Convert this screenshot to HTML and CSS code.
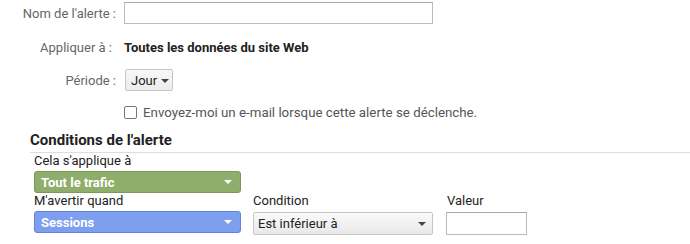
FILE: index.html
```html
<!DOCTYPE html>
<html lang="fr">
<head>
    <meta charset="UTF-8">
    <title>Nouvelle alerte</title>
    <link rel="stylesheet" href="styles.css">
</head>
<body>

<div class="alert-form">
    <div class="form-row row-name">
        <div class="form-label">Nom de l'alerte :</div>
        <input class="text-input name-input" type="text">
    </div>

    <div class="form-row row-apply">
        <div class="form-label label-apply">Appliquer à :</div>
        <div class="apply-value">Toutes les données du site Web</div>
    </div>

    <div class="form-row row-period">
        <div class="form-label">Période :</div>
        <button class="menu-button">Jour <span class="caret"></span></button>
    </div>

    <div class="form-row row-email">
        <div class="form-label"></div>
        <label class="check-label"><span class="checkbox"></span>Envoyez-moi un e-mail lorsque cette alerte se déclenche.</label>
    </div>
</div>

<div class="conditions">
    <h2>Conditions de l'alerte</h2>

    <div class="cond-block">
        <div class="cond-label">Cela s'applique à</div>
        <div class="pill pill-green">Tout le trafic <span class="caret caret-white"></span></div>
    </div>

    <div class="cond-grid">
        <div class="cond-col col-metric">
            <div class="cond-label">M'avertir quand</div>
            <div class="pill pill-blue">Sessions <span class="caret caret-white"></span></div>
        </div>
        <div class="cond-col col-condition">
            <div class="cond-label">Condition</div>
            <div class="select-box">Est inférieur à <span class="caret"></span></div>
        </div>
        <div class="cond-col col-value">
            <div class="cond-label">Valeur</div>
            <input class="text-input value-input" type="text">
        </div>
    </div>
</div>

</body>
</html>
```

FILE: styles.css
```css
body {
    font-family: Roboto, "Liberation Sans", Arial, sans-serif;
    font-size: 13px;
    color: #222;
    background: #fff;
    margin: 0;
    padding: 0;
    width: 690px;
    height: 244px;
    overflow: hidden;
}

.alert-form {
    padding-top: 2px;
}

.form-row {
    display: flex;
    align-items: center;
}

.form-label {
    width: 116px;
    text-align: right;
    color: #666;
    margin-right: 8px;
    flex-shrink: 0;
}

.label-apply {
    padding-right: 4px;
    width: 112px;
}

.text-input {
    box-sizing: border-box;
    border: 1px solid #bbb;
    border-top-color: #a8a8a8;
    margin: 0;
    padding: 0 4px;
    font: inherit;
    background: #fff;
}

.name-input {
    width: 309px;
    height: 22px;
}

.row-apply {
    margin-top: 14px;
    height: 18px;
}

.apply-value {
    font-weight: bold;
    color: #222;
}

.row-period {
    margin-top: 13px;
}

.menu-button {
    box-sizing: border-box;
    margin-left: 1px;
    height: 22px;
    width: 48px;
    padding: 0 0 0 5px;
    text-align: left;
    font: inherit;
    font-size: 13px;
    color: #222;
    border: 1px solid #c6c6c6;
    border-radius: 2px;
    background: linear-gradient(#f8f8f8, #ececec);
}

.caret {
    display: inline-block;
    width: 0;
    height: 0;
    border-left: 4px solid transparent;
    border-right: 4px solid transparent;
    border-top: 4px solid #444;
    vertical-align: middle;
    margin-left: 1px;
}

.caret-white {
    border-top-color: #fff;
    margin-left: auto;
}

.row-email {
    margin-top: 14px;
}

.check-label {
    display: flex;
    align-items: center;
    color: #555;
    font-size: 13.3px;
}

.checkbox {
    box-sizing: border-box;
    width: 13px;
    height: 13px;
    border: 1px solid #777;
    border-radius: 2px;
    margin-right: 6px;
    background: #fff;
}

.conditions {
    margin-left: 30px;
    margin-top: 11px;
}

.conditions h2 {
    font-size: 15px;
    font-weight: bold;
    line-height: 18px;
    margin: 0;
    padding-bottom: 3px;
    border-bottom: 1px solid #ddd;
    color: #222;
}

.cond-block {
    margin-left: 4px;
}

.cond-label {
    color: #222;
    height: 17px;
    line-height: 16px;
}

.pill {
    box-sizing: border-box;
    display: flex;
    align-items: center;
    width: 207px;
    height: 22px;
    padding: 0 8px 0 6px;
    border-radius: 3px;
    color: #fff;
    font-weight: bold;
    font-size: 13px;
    margin-top: 1px;
}

.pill-green {
    background: #8fad6b;
    border: 1px solid #7b9a57;
}

.pill-blue {
    background: #7e9ef0;
    border: 1px solid #6283d8;
}

.cond-grid {
    display: flex;
    margin-left: 4px;
}

.col-metric {
    width: 219px;
}

.col-condition {
    width: 193px;
}

.col-value .cond-label {
    padding-left: 1px;
}

.select-box {
    box-sizing: border-box;
    display: flex;
    align-items: center;
    width: 180px;
    height: 23px;
    margin-top: 2px;
    padding: 0 6px 0 4px;
    border: 1px solid #c6c6c6;
    border-radius: 2px;
    background: linear-gradient(#fafafa, #e8e8e8);
    color: #222;
}

.select-box .caret {
    margin-left: auto;
}

.value-input {
    width: 81px;
    height: 23px;
    margin-top: 2px;
}
```
